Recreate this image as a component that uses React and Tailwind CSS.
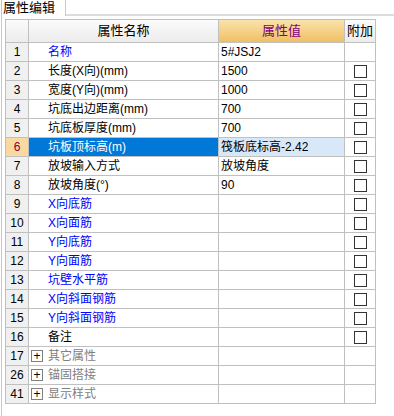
import React from 'react';

const rows = [
  { n: 1, name: '名称', value: '5#JSJ2', color: 'blue', check: false },
  { n: 2, name: '长度(X向)(mm)', value: '1500', color: 'black', check: true },
  { n: 3, name: '宽度(Y向)(mm)', value: '1000', color: 'black', check: true },
  { n: 4, name: '坑底出边距离(mm)', value: '700', color: 'black', check: true },
  { n: 5, name: '坑底板厚度(mm)', value: '700', color: 'black', check: true },
  { n: 6, name: '坑板顶标高(m)', value: '筏板底标高-2.42', color: 'black', check: true, selected: true },
  { n: 7, name: '放坡输入方式', value: '放坡角度', color: 'black', check: true },
  { n: 8, name: '放坡角度(°)', value: '90', color: 'black', check: true },
  { n: 9, name: 'X向底筋', value: '', color: 'blue', check: true },
  { n: 10, name: 'X向面筋', value: '', color: 'blue', check: true },
  { n: 11, name: 'Y向底筋', value: '', color: 'blue', check: true },
  { n: 12, name: 'Y向面筋', value: '', color: 'blue', check: true },
  { n: 13, name: '坑壁水平筋', value: '', color: 'blue', check: true },
  { n: 14, name: 'X向斜面钢筋', value: '', color: 'blue', check: true },
  { n: 15, name: 'Y向斜面钢筋', value: '', color: 'blue', check: true },
  { n: 16, name: '备注', value: '', color: 'black', check: true },
  { n: 17, name: '其它属性', value: '', group: true },
  { n: 26, name: '锚固搭接', value: '', group: true },
  { n: 41, name: '显示样式', value: '', group: true },
];

function Row({ r }) {
  const nameColor = r.selected
    ? 'text-white bg-[#0078d7]'
    : r.group
    ? 'text-[#808080]'
    : r.color === 'blue'
    ? 'text-[#0000ff]'
    : 'text-black';

  return (
    <div className="flex h-[19px]">
      <div
        className={`w-[23px] border-r border-b border-[#c0c0c0] flex items-center justify-center ${
          r.selected ? 'bg-[#fad9a1] text-[#800040]' : 'bg-[#f0f0f0] text-black'
        }`}
      >
        {r.n}
      </div>
      <div className={`w-[190px] border-r border-b border-[#c0c0c0] flex items-center ${nameColor}`}>
        {r.group ? (
          <>
            <span className="ml-[2px] w-[12px] h-[12px] border border-[#808080] flex items-center justify-center text-black text-[12px] leading-none">
              +
            </span>
            <span className="ml-[5px]">{r.name}</span>
          </>
        ) : (
          <span className="pl-[19px]">{r.name}</span>
        )}
      </div>
      <div
        className={`w-[126px] border-r border-b border-[#c0c0c0] flex items-center pl-[2px] text-black ${
          r.selected ? 'bg-[#d9e8f8]' : ''
        }`}
      >
        {r.value}
      </div>
      <div className="w-[31px] border-r border-b border-[#c0c0c0] flex items-center justify-center">
        {r.check && <span className="w-[13px] h-[13px] border border-[#333333] bg-white" />}
      </div>
    </div>
  );
}

export default function App() {
  return (
    <div className="w-[394px] h-[416px] bg-white overflow-hidden text-[12px] font-['Liberation_Sans','Noto_Sans_CJK_SC',sans-serif]">
      <div className="flex h-[16px]">
        <div className="w-[65px] border-l border-r border-[#c8c8c8] ml-[1px]">
          <div className="text-[13px] leading-[15px] pl-[1px] text-black">属性编辑</div>
        </div>
        <div className="flex-1 border-b-2 border-[#dcdcdc]" />
      </div>
      <div className="ml-[1px] h-[400px] border-l border-[#c8c8c8] pt-[3px] pl-[3px]">
        <div className="border-l border-t border-[#c0c0c0] w-fit">
          <div className="flex h-[23px]">
            <div className="w-[23px] border-r border-b border-[#c0c0c0] bg-gradient-to-b from-[#fbfbfb] to-[#ececec]" />
            <div className="w-[190px] border-r border-b border-[#c0c0c0] bg-gradient-to-b from-[#fbfbfb] to-[#ececec] flex items-center justify-center text-[13px] text-black">
              属性名称
            </div>
            <div className="w-[126px] border-r border-b border-[#c0c0c0] bg-gradient-to-b from-[#fae2ab] to-[#f0c062] flex items-center justify-center text-[13px] text-[#800080]">
              属性值
            </div>
            <div className="w-[31px] border-r border-b border-[#c0c0c0] bg-gradient-to-b from-[#fbfbfb] to-[#ececec] flex items-center justify-center text-[13px] text-black">
              附加
            </div>
          </div>
          {rows.map((r) => (
            <Row key={r.n} r={r} />
          ))}
        </div>
      </div>
    </div>
  );
}
